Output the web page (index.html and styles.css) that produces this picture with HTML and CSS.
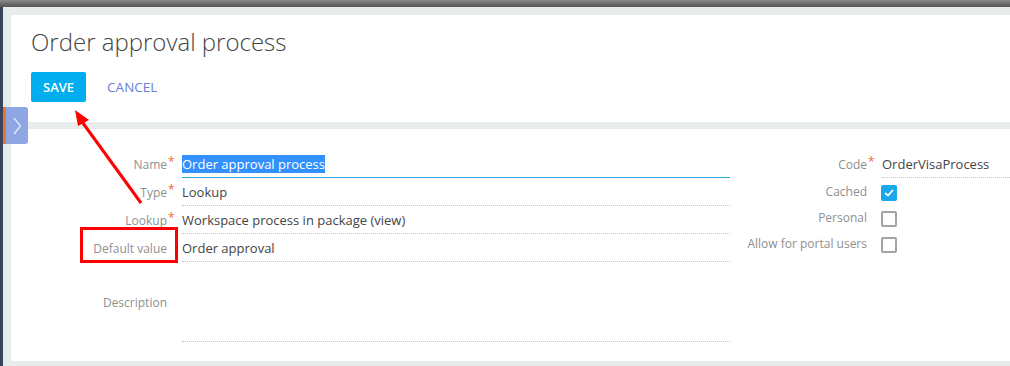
FILE: index.html
```html
<!DOCTYPE html>
<html lang="en">
<head>
    <meta charset="UTF-8">
    <meta name="viewport" content="width=device-width, initial-scale=1.0">
    <title>Order approval process</title>
    <link rel="stylesheet" href="styles.css">
</head>
<body>
    <div class="topbar"></div>
    <div class="shell">
        <div class="rail"></div>
        <div class="workspace">
            <div class="card header-card">
                <h1 class="page-title">Order approval process</h1>
                <div class="actions">
                    <button class="btn-save">SAVE</button>
                    <button class="btn-cancel">CANCEL</button>
                </div>
            </div>

            <div class="card form-card">
                <div class="col-left">
                    <div class="row">
                        <label class="lbl">Name<span class="req">*</span></label>
                        <div class="val val-active"><span class="selected">Order approval process</span></div>
                    </div>
                    <div class="row">
                        <label class="lbl">Type<span class="req">*</span></label>
                        <div class="val">Lookup</div>
                    </div>
                    <div class="row">
                        <label class="lbl">Lookup<span class="req">*</span></label>
                        <div class="val">Workspace process in package (view)</div>
                    </div>
                    <div class="row">
                        <label class="lbl">Default value<span class="req"></span></label>
                        <div class="val">Order approval</div>
                    </div>
                    <div class="row row-tall">
                        <label class="lbl">Description<span class="req"></span></label>
                        <div class="val"></div>
                    </div>
                </div>

                <div class="col-right">
                    <div class="row">
                        <label class="lbl">Code<span class="req">*</span></label>
                        <div class="val">OrderVisaProcess</div>
                    </div>
                    <div class="row row-check first-check">
                        <label class="lbl">Cached<span class="req"></span></label>
                        <div class="check-cell">
                            <span class="checkbox checked">
                                <svg width="10" height="8" viewBox="0 0 10 8"><polyline points="1,4 4,6.5 9,1" fill="none" stroke="#fff" stroke-width="1.8"/></svg>
                            </span>
                        </div>
                    </div>
                    <div class="row row-check">
                        <label class="lbl">Personal<span class="req"></span></label>
                        <div class="check-cell"><span class="checkbox"></span></div>
                    </div>
                    <div class="row row-check">
                        <label class="lbl">Allow for portal users<span class="req"></span></label>
                        <div class="check-cell"><span class="checkbox"></span></div>
                    </div>
                </div>
            </div>
        </div>
    </div>

    <!-- side panel toggle -->
    <div class="side-tab">
        <svg width="10" height="18" viewBox="0 0 10 18"><polyline points="2,1 8.5,9 2,17" fill="none" stroke="#e6ecfb" stroke-width="1.2"/></svg>
    </div>

    <!-- screenshot annotations -->
    <svg class="annotations" width="1010" height="366" viewBox="0 0 1010 366">
        <line x1="141" y1="203" x2="80" y2="119" stroke="#f00" stroke-width="3"/>
        <polygon points="75,110 89,120 78,126" fill="#f00"/>
        <rect x="81.5" y="228.5" width="95" height="33" fill="none" stroke="#f00" stroke-width="3"/>
    </svg>
</body>
</html>
```

FILE: styles.css
```css
body {
    margin: 0;
    padding: 0;
    background-color: #e8eceb;
    font-family: "Open Sans", Arial, sans-serif;
    height: 366px;
    overflow: hidden;
    position: relative;
}
.topbar {
    height: 7px;
    background: linear-gradient(#8d8d8d, #6c6c6c 50%, #555);
}
.shell {
    display: flex;
    height: 359px;
}
.rail {
    width: 3px;
    background-color: #38445f;
}
.workspace {
    flex: 1;
    padding: 8px 0 0 8px;
}
.card {
    background-color: #fff;
    border-radius: 2px 0 0 2px;
}
.header-card {
    height: 107px;
    box-sizing: border-box;
    padding: 11px 20px 0;
}
.page-title {
    margin: 0;
    font-size: 24px;
    font-weight: 300;
    line-height: 32px;
    color: #454545;
}
.actions {
    display: flex;
    margin-top: 14px;
}
.actions button {
    height: 30px;
    padding: 0 12px;
    border: none;
    border-radius: 2px;
    font-family: "Open Sans", Arial, sans-serif;
    font-size: 13px;
    cursor: pointer;
}
.btn-save {
    background-color: #00aeef;
    color: #fff;
    font-weight: 600;
}
.actions .btn-cancel {
    margin-left: 9px;
    background: none;
    color: #6781d6;
    font-size: 13.5px;
}
.form-card {
    margin-top: 7px;
    height: 232px;
    box-sizing: border-box;
    padding-top: 21px;
    display: flex;
}
.col-left {
    width: 719px;
}
.col-right {
    flex: 1;
}
.row {
    display: grid;
    grid-template-columns: 171px 1fr;
    height: 28px;
}
.col-right .row {
    grid-template-columns: 152px 1fr;
}
.row-tall {
    height: 80px;
}
.lbl {
    display: flex;
    align-items: center;
    justify-content: flex-end;
    padding-right: 8px;
    font-size: 12px;
    color: #8f8f8f;
}
.req {
    display: inline-block;
    width: 7px;
    padding-left: 1px;
    box-sizing: border-box;
    position: relative;
    top: -2px;
    color: #f26a3d;
    font-size: 12px;
    line-height: 12px;
}
.val {
    display: flex;
    align-items: center;
    border-bottom: 1px dotted #c4c4c4;
    font-size: 13px;
    color: #444;
    white-space: nowrap;
}
.val-active {
    border-bottom: 1px solid #2aa3dd;
}
.selected {
    background-color: #3390ff;
    color: #fff;
    line-height: 18px;
}
.row-check {
    height: 26px;
}
.first-check {
    margin-top: 2px;
}
.row-check .lbl {
    padding-bottom: 3px;
}
.check-cell {
    display: flex;
    align-items: center;
}
.checkbox {
    width: 16px;
    height: 16px;
    box-sizing: border-box;
    border: 2px solid #a3a3a3;
    border-radius: 2px;
    margin-left: -1px;
    display: flex;
    align-items: center;
    justify-content: center;
}
.checkbox.checked {
    background-color: #19a9ea;
    border-color: #19a9ea;
}
.side-tab {
    position: absolute;
    left: 3px;
    top: 107px;
    width: 22px;
    height: 37px;
    background-color: #8fa6e4;
    border-left: 3px solid #e8772e;
    border-radius: 0 3px 3px 0;
    display: flex;
    align-items: center;
    justify-content: center;
}
.annotations {
    position: absolute;
    left: 0;
    top: 0;
    pointer-events: none;
}
```
